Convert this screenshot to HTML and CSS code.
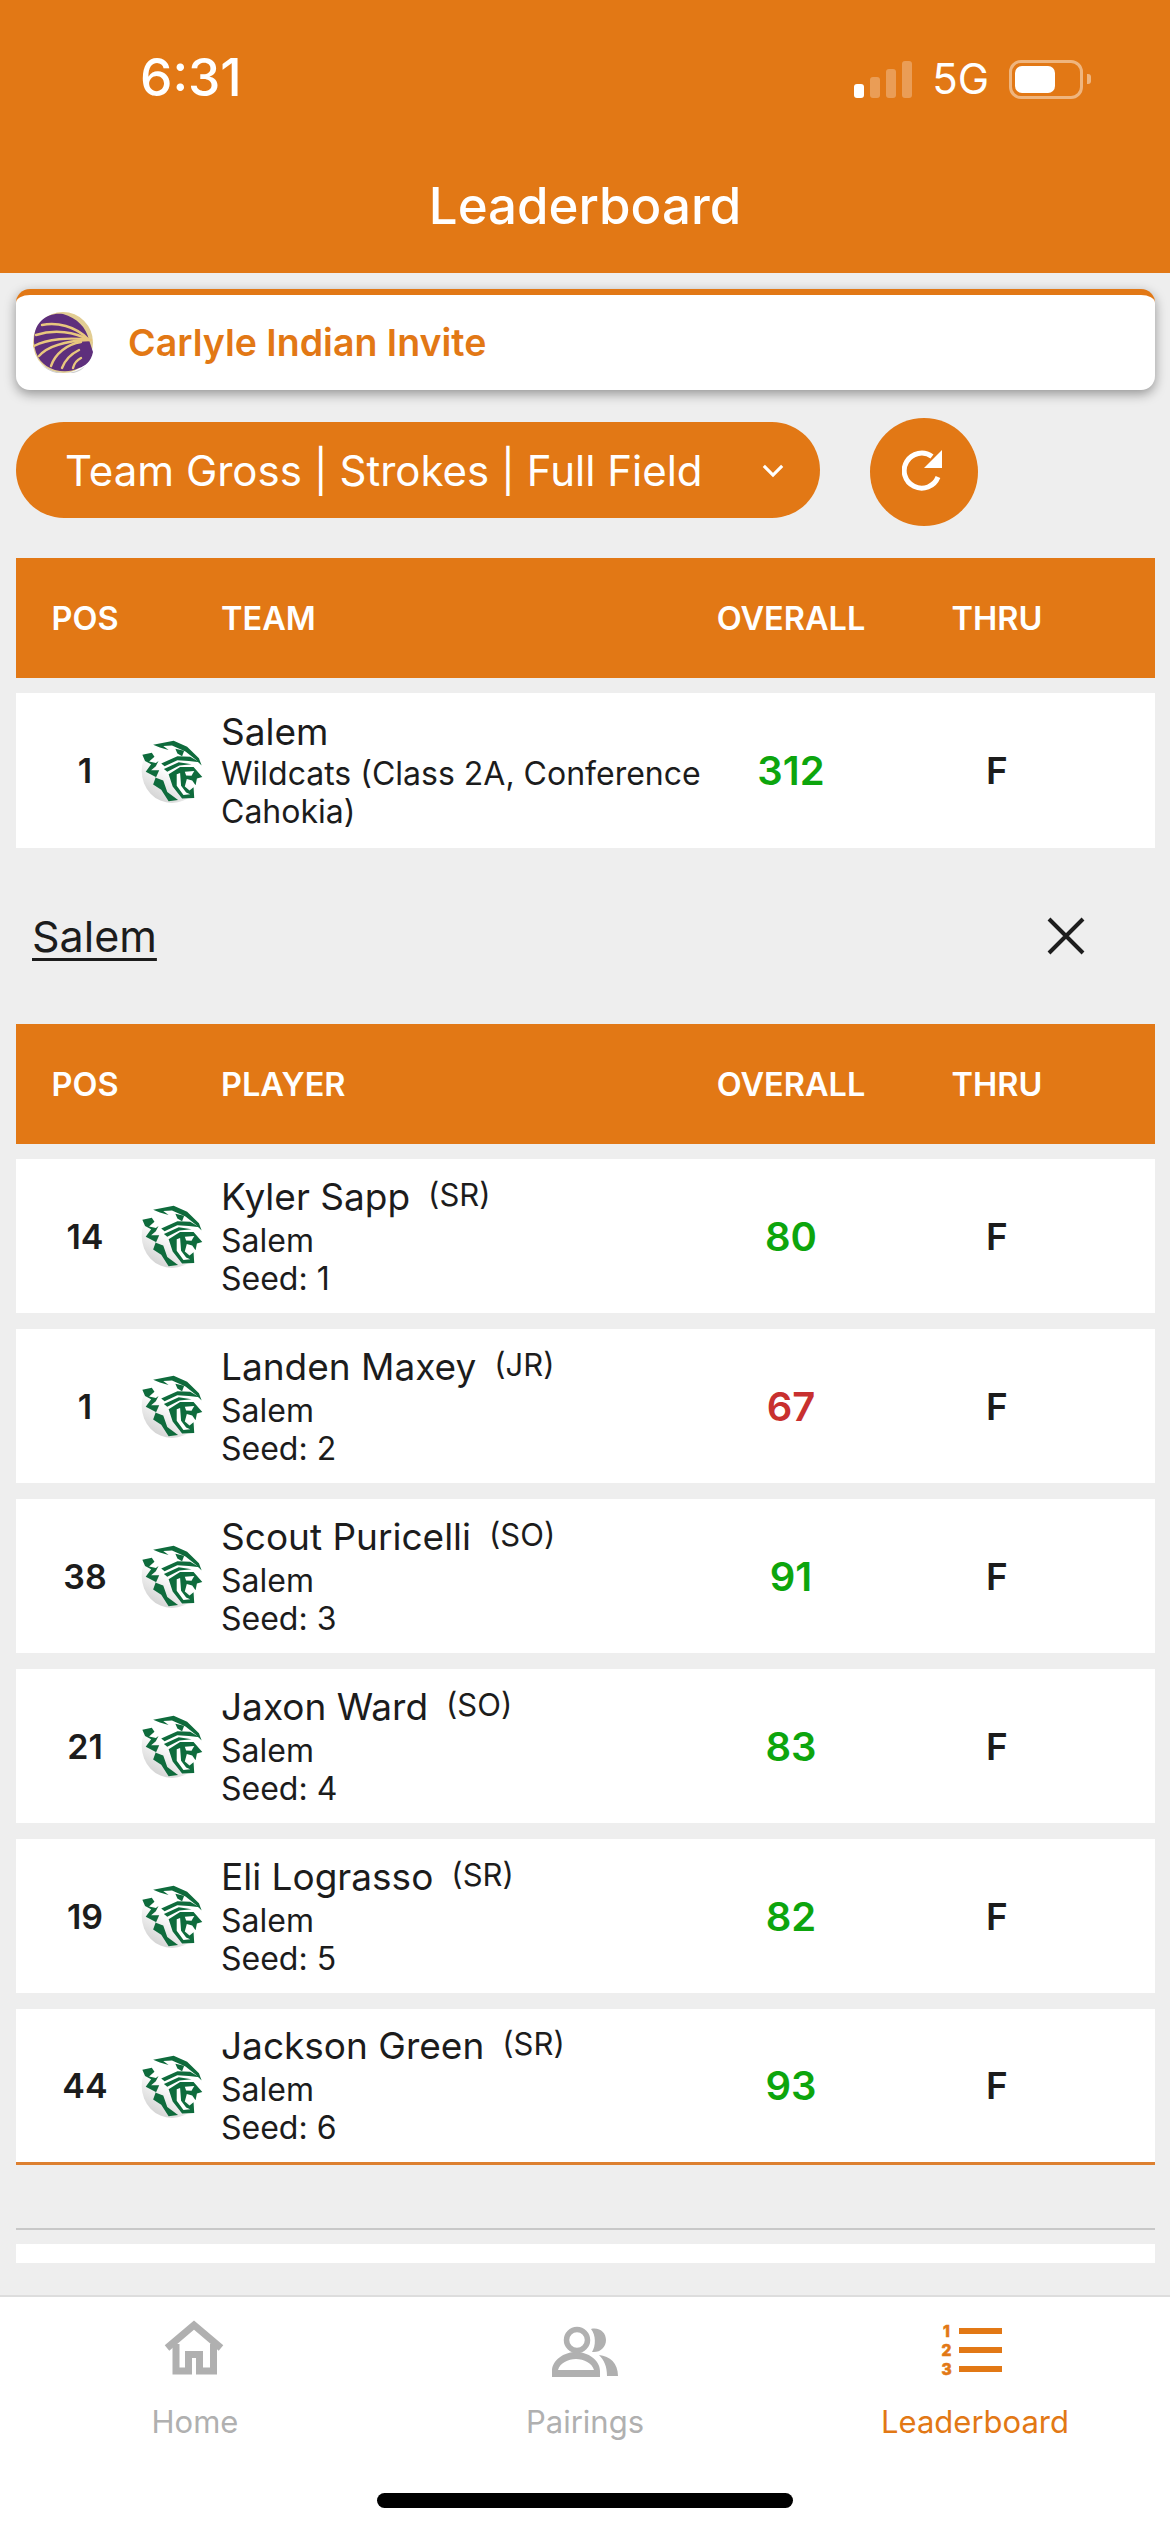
FILE: index.html
```html
<!DOCTYPE html>
<html lang="en">
<head>
<meta charset="utf-8">
<title>Leaderboard</title>
<link rel="stylesheet" href="styles.css">
</head>
<body>
<svg class="defs" width="0" height="0" aria-hidden="true">
  <defs>
    <linearGradient id="ball" x1="0.75" y1="0.1" x2="0.25" y2="0.95">
      <stop offset="0.5" stop-color="#ffffff"/>
      <stop offset="1" stop-color="#d4d4d4"/>
    </linearGradient>
    <symbol id="cat" viewBox="70 55 180 190">
      <ellipse cx="160" cy="150" rx="90" ry="95" fill="url(#ball)"/>
      <g fill="#0e6b3c">
        <path d="M104 72 L165 60 L205 78 L240 112 L248 134 L230 116 L200 92 L160 74 L134 76 L150 88 L124 80 Z"/>
        <path d="M72 102 L100 96 L108 108 L92 122 L112 126 L120 120 L112 136 L98 148 L122 148 L112 170 L134 178 L146 212 L178 236 L150 240 L128 206 L104 190 L112 168 L82 152 L98 130 L80 120 Z"/>
        <path d="M170 84 L196 90 L190 106 L176 98 Z"/>
        <path d="M128 128 L176 106 L214 108 L242 124 L210 120 L176 118 L138 136 Z"/>
        <path d="M136 144 L180 124 L218 130 L182 134 L146 152 Z"/>
        <path d="M150 160 L184 138 L224 138 L250 168 L234 172 L230 192 L220 178 L204 174 L198 196 L212 208 L224 198 L226 230 L190 232 L162 196 Z"/>
      </g>
      <path d="M198 152 L226 150 L218 164 L202 163 Z" fill="#fff"/>
      <path d="M174 160 L184 156 L187 194 L202 214 L214 219 L194 221 L174 194 Z" fill="#fff"/>
    </symbol>
    <symbol id="feather" viewBox="0 0 60 61">
      <ellipse cx="30" cy="30.5" rx="30" ry="30.500" fill="#e2cd93"/>
      <path d="M8 9 C14 3 22 1 30 2 C44 6 53 15 56 28 L60 40 C58 50 52 54 46 56 C38 60 30 60 22 58 C10 54 2 46 1 30 C1 20 3 14 8 9 Z" fill="#5e2f7c"/>
      <path d="M8 52 C22 64 42 63 52 54 C46 64 20 66 8 52 Z" fill="#cfcfcf"/>
      <g fill="none" stroke="#e8c77e" stroke-width="2.400" stroke-linecap="round">
        <path d="M9 13 C24 10 42 14 55 27"/>
        <path d="M3 23 C22 17 42 20 56 28"/>
        <path d="M1 34 C14 27 36 25 58 28"/>
        <path d="M6 44 C14 35 32 29 56 28"/>
        <path d="M18 54 C22 42 34 32 48 30"/>
        <path d="M29 56 C32 48 38 42 46 38"/>
        <path d="M40 56 C41 52 44 48 48 46"/>
      </g>
    </symbol>
  </defs>
</svg>

<header class="app-header">
  <div class="status-bar">
    <span class="clock">6:31</span>
    <div class="status-icons">
      <div class="signal">
        <span class="bar bar-1"></span>
        <span class="bar bar-2"></span>
        <span class="bar bar-3"></span>
        <span class="bar bar-4"></span>
      </div>
      <span class="network">5G</span>
      <div class="battery"><span class="battery-fill"></span></div>
      <span class="battery-nub"></span>
    </div>
  </div>
  <h1 class="title">Leaderboard</h1>
</header>

<main class="content">
  <section class="event-card">
    <svg class="event-logo"><use href="#feather"/></svg>
    <span class="event-name">Carlyle Indian Invite</span>
  </section>

  <div class="filters">
    <div class="dropdown">
      <span>Team Gross | Strokes | Full Field</span>
      <svg class="chevron" viewBox="0 0 24 16"><path d="M2 3 L12 13 L22 3" fill="none" stroke="#fff" stroke-width="3.400"/></svg>
    </div>
    <div class="refresh">
      <svg viewBox="0 0 44 44" width="44" height="44">
        <path d="M36 27 A17.500 17.500 0 1 1 30 6.500" fill="none" stroke="#fff" stroke-width="5"/>
        <path d="M40 0 V18 H22 Z" fill="#fff"/>
      </svg>
    </div>
  </div>

  <div class="table-head">
    <span class="c-pos">POS</span><span class="c-logo"></span><span class="c-name">TEAM</span><span class="c-score">OVERALL</span><span class="c-thru">THRU</span>
  </div>
  <div class="row team-row">
    <span class="c-pos">1</span>
    <svg class="c-logo logo"><use href="#cat"/></svg>
    <div class="c-name"><div class="name">Salem</div><div class="sub">Wildcats (Class 2A, Conference Cahokia)</div></div>
    <span class="c-score good">312</span>
    <span class="c-thru">F</span>
  </div>

  <div class="section-title">
    <span class="section-link">Salem</span>
    <svg class="close" viewBox="0 0 38 38"><path d="M2 2 L36 36 M36 2 L2 36" stroke="#1d1d1d" stroke-width="4" fill="none"/></svg>
  </div>

  <div class="table-head">
    <span class="c-pos">POS</span><span class="c-logo"></span><span class="c-name">PLAYER</span><span class="c-score">OVERALL</span><span class="c-thru">THRU</span>
  </div>
  <div class="players">
    <div class="row"><span class="c-pos">14</span><svg class="c-logo logo"><use href="#cat"/></svg><div class="c-name"><div class="name">Kyler Sapp<span class="year">(SR)</span></div><div class="sub">Salem</div><div class="sub">Seed: 1</div></div><span class="c-score good">80</span><span class="c-thru">F</span></div>
    <div class="row"><span class="c-pos">1</span><svg class="c-logo logo"><use href="#cat"/></svg><div class="c-name"><div class="name">Landen Maxey<span class="year">(JR)</span></div><div class="sub">Salem</div><div class="sub">Seed: 2</div></div><span class="c-score best">67</span><span class="c-thru">F</span></div>
    <div class="row"><span class="c-pos">38</span><svg class="c-logo logo"><use href="#cat"/></svg><div class="c-name"><div class="name">Scout Puricelli<span class="year">(SO)</span></div><div class="sub">Salem</div><div class="sub">Seed: 3</div></div><span class="c-score good">91</span><span class="c-thru">F</span></div>
    <div class="row"><span class="c-pos">21</span><svg class="c-logo logo"><use href="#cat"/></svg><div class="c-name"><div class="name">Jaxon Ward<span class="year">(SO)</span></div><div class="sub">Salem</div><div class="sub">Seed: 4</div></div><span class="c-score good">83</span><span class="c-thru">F</span></div>
    <div class="row"><span class="c-pos">19</span><svg class="c-logo logo"><use href="#cat"/></svg><div class="c-name"><div class="name">Eli Lograsso<span class="year">(SR)</span></div><div class="sub">Salem</div><div class="sub">Seed: 5</div></div><span class="c-score good">82</span><span class="c-thru">F</span></div>
    <div class="row last-row"><span class="c-pos">44</span><svg class="c-logo logo"><use href="#cat"/></svg><div class="c-name"><div class="name">Jackson Green<span class="year">(SR)</span></div><div class="sub">Salem</div><div class="sub">Seed: 6</div></div><span class="c-score good">93</span><span class="c-thru">F</span></div>
  </div>
  <div class="rule"></div>
  <div class="stub"></div>
</main>

<footer class="tabbar">
  <nav class="tabs">
    <div class="tab">
      <svg viewBox="-5 0 120 80" width="120" height="80">
        <path d="M27 38 L54 15 L81 38" fill="none" stroke="#b0b0b0" stroke-width="7"/>
        <path d="M36 34 V61 H48.500 V44.500 H59.500 V61 H73.500 V34" fill="none" stroke="#b0b0b0" stroke-width="7"/>
      </svg>
      <span class="tab-label">Home</span>
    </div>
    <div class="tab">
      <svg viewBox="-5 0 120 80" width="120" height="80">
        <circle cx="47" cy="30" r="10.500" fill="none" stroke="#b0b0b0" stroke-width="5.500"/>
        <path d="M61 19 C70 17 76 23 76 30 C76 37 70 43 62 42 C66 36 66 25 61 19 Z" fill="#b0b0b0"/>
        <path d="M22 67 V61 C22 50 34 42 46 42 C58 42 70 50 70 61 V67 Z M28 60 H64 C62 53 54 49 46 49 C38 49 30 53 28 60 Z" fill="#b0b0b0" fill-rule="evenodd"/>
        <path d="M69 45 C80 46 88 53 88 66 H77 C77 56 74 50 69 45 Z" fill="#b0b0b0"/>
      </svg>
      <span class="tab-label">Pairings</span>
    </div>
    <div class="tab tab-active">
      <svg viewBox="-5 0 120 80" width="120" height="80" class="rank-icon">
        <text x="26.500" y="27">1</text>
        <text x="26.500" y="46">2</text>
        <text x="26.500" y="65">3</text>
        <path d="M39 18 H82 V24 H39 Z M39 37 H82 V43 H39 Z M39 56 H82 V62 H39 Z" fill="#e27815"/>
      </svg>
      <span class="tab-label">Leaderboard</span>
    </div>
  </nav>
  <div class="home-indicator"></div>
</footer>
</body>
</html>
```

FILE: styles.css
```css
* { box-sizing: border-box; }

html, body {
  margin: 0;
  padding: 0;
}

body {
  width: 1170px;
  height: 2532px;
  display: flex;
  flex-direction: column;
  overflow: hidden;
  background: #eeeeee;
  color: #1c1c1c;
  font-family: Inter, "Liberation Sans", sans-serif;
}

.defs { display: block; height: 0; }

.app-header {
  height: 273px;
  flex: none;
  background: #e27815;
  color: #fff;
}

.status-bar {
  height: 158px;
  display: flex;
  justify-content: space-between;
  align-items: center;
  padding: 0 79px 0 140px;
}

.clock {
  margin-bottom: 2px;
  font-size: 51.500px;
  font-weight: 500;
  line-height: 1;
}

.status-icons {
  display: flex;
  align-items: center;
}

.signal {
  display: flex;
  align-items: flex-end;
  gap: 6px;
  height: 37px;
  margin-right: 20px;
}

.bar {
  display: block;
  width: 10px;
  border-radius: 3px;
  background: rgba(255, 255, 255, 0.28);
}

.bar-1 { height: 14px; background: #fff; }
.bar-2 { height: 21px; }
.bar-3 { height: 29px; }
.bar-4 { height: 37px; }

.network {
  font-size: 42px;
  line-height: 1;
  margin-right: 20px;
}

.battery {
  width: 74px;
  height: 39px;
  padding: 3px;
  border: 3px solid rgba(255, 255, 255, 0.45);
  border-radius: 12px;
}

.battery-fill {
  display: block;
  width: 40px;
  height: 27px;
  border-radius: 7px;
  background: #fff;
}

.battery-nub {
  width: 4px;
  height: 10px;
  margin-left: 4px;
  border-radius: 0 3px 3px 0;
  background: rgba(255, 255, 255, 0.45);
}

.title {
  margin: 20px 0 0;
  text-align: center;
  font-size: 51px;
  font-weight: 500;
  line-height: 56px;
}

.content {
  flex: 1;
  min-height: 0;
  overflow: hidden;
  padding: 16px 15px 0 16px;
}

.event-card {
  height: 101px;
  display: flex;
  align-items: center;
  border-top: 6px solid #e27815;
  border-radius: 14px;
  background: #fff;
  box-shadow: 0 4px 12px rgba(0, 0, 0, 0.38);
}

.event-logo {
  width: 60px;
  height: 61px;
  margin: 0 35px 0 17px;
  flex: none;
}

.event-name {
  color: #e27815;
  font-size: 37.500px;
  font-weight: 600;
}

.filters {
  display: flex;
  align-items: center;
  height: 108px;
  margin-top: 28px;
}

.dropdown {
  width: 804px;
  height: 96px;
  margin-bottom: 4px;
  display: flex;
  align-items: center;
  justify-content: space-between;
  padding: 0 36px 0 49px;
  border-radius: 48px;
  background: #e27815;
  color: #fff;
  font-size: 42px;
}

.chevron {
  width: 22px;
  height: 15px;
}

.refresh {
  width: 108px;
  height: 108px;
  margin-left: 50px;
  display: flex;
  align-items: center;
  justify-content: center;
  border-radius: 50%;
  background: #e27815;
}

.table-head,
.row {
  display: grid;
  grid-template-columns: 110px 81px 485px 170px 36px 170px;
  align-items: center;
  padding-left: 14px;
}

.table-head {
  height: 120px;
  margin-top: 32px;
  background: #e27815;
  color: #fff;
  font-size: 32.500px;
  font-weight: 600;
}

.section-title + .table-head { margin-top: 0; }

.c-pos { grid-column: 1; text-align: center; }
.c-logo { grid-column: 2; }
.c-name { grid-column: 3; }
.c-score { grid-column: 4; text-align: center; }
.c-thru { grid-column: 6; text-align: center; }

.row {
  height: 154px;
  margin-top: 16px;
  background: #fff;
}

.row .c-pos {
  font-size: 34px;
  font-weight: 600;
}

.row .c-score {
  font-size: 40px;
  font-weight: 600;
}

.row .c-thru {
  font-size: 37px;
  font-weight: 600;
}

.logo {
  width: 64px;
  height: 64px;
}

.name {
  margin-bottom: 1px;
  font-size: 37px;
  line-height: 44px;
}

.year {
  margin-left: 18px;
  font-size: 31px;
  position: relative;
  top: -4px;
}

.sub {
  font-size: 32px;
  line-height: 38px;
}

.good { color: #0da50d; }
.best { color: #c8302f; }

.team-row {
  height: 155px;
  margin-top: 15px;
}

.section-title {
  height: 176px;
  display: flex;
  align-items: center;
  justify-content: space-between;
  padding: 0 70px 0 16px;
}

.section-link {
  font-size: 43px;
  text-decoration: underline;
  text-decoration-thickness: 3px;
  text-underline-offset: 6px;
}

.close {
  width: 38px;
  height: 38px;
}

.players .row:first-child { margin-top: 15px; }

.last-row {
  height: 156px;
  border-bottom: 3px solid #dd8030;
}

.rule {
  height: 2px;
  margin-top: 63px;
  background: #c8c8c8;
}

.stub {
  height: 19px;
  margin-top: 14px;
  background: #fff;
}

.tabbar {
  height: 237px;
  flex: none;
  border-top: 2px solid #dddddd;
  background: #fff;
}

.tabs {
  display: flex;
  padding-top: 13px;
}

.tab {
  width: 390px;
  display: flex;
  flex-direction: column;
  align-items: center;
  color: #b0b0b0;
}

.tab-label {
  margin-top: 12px;
  font-size: 31px;
  line-height: 40px;
}

.tab-active { color: #e27815; }

.rank-icon text {
  fill: #e27815;
  stroke: #e27815;
  stroke-width: 0.6px;
  text-anchor: middle;
  font-size: 15.500px;
  font-weight: 800;
  font-family: Inter, "Liberation Sans", sans-serif;
}

.home-indicator {
  width: 416px;
  height: 15px;
  margin: 51px auto 0;
  border-radius: 8px;
  background: #000;
}
```
